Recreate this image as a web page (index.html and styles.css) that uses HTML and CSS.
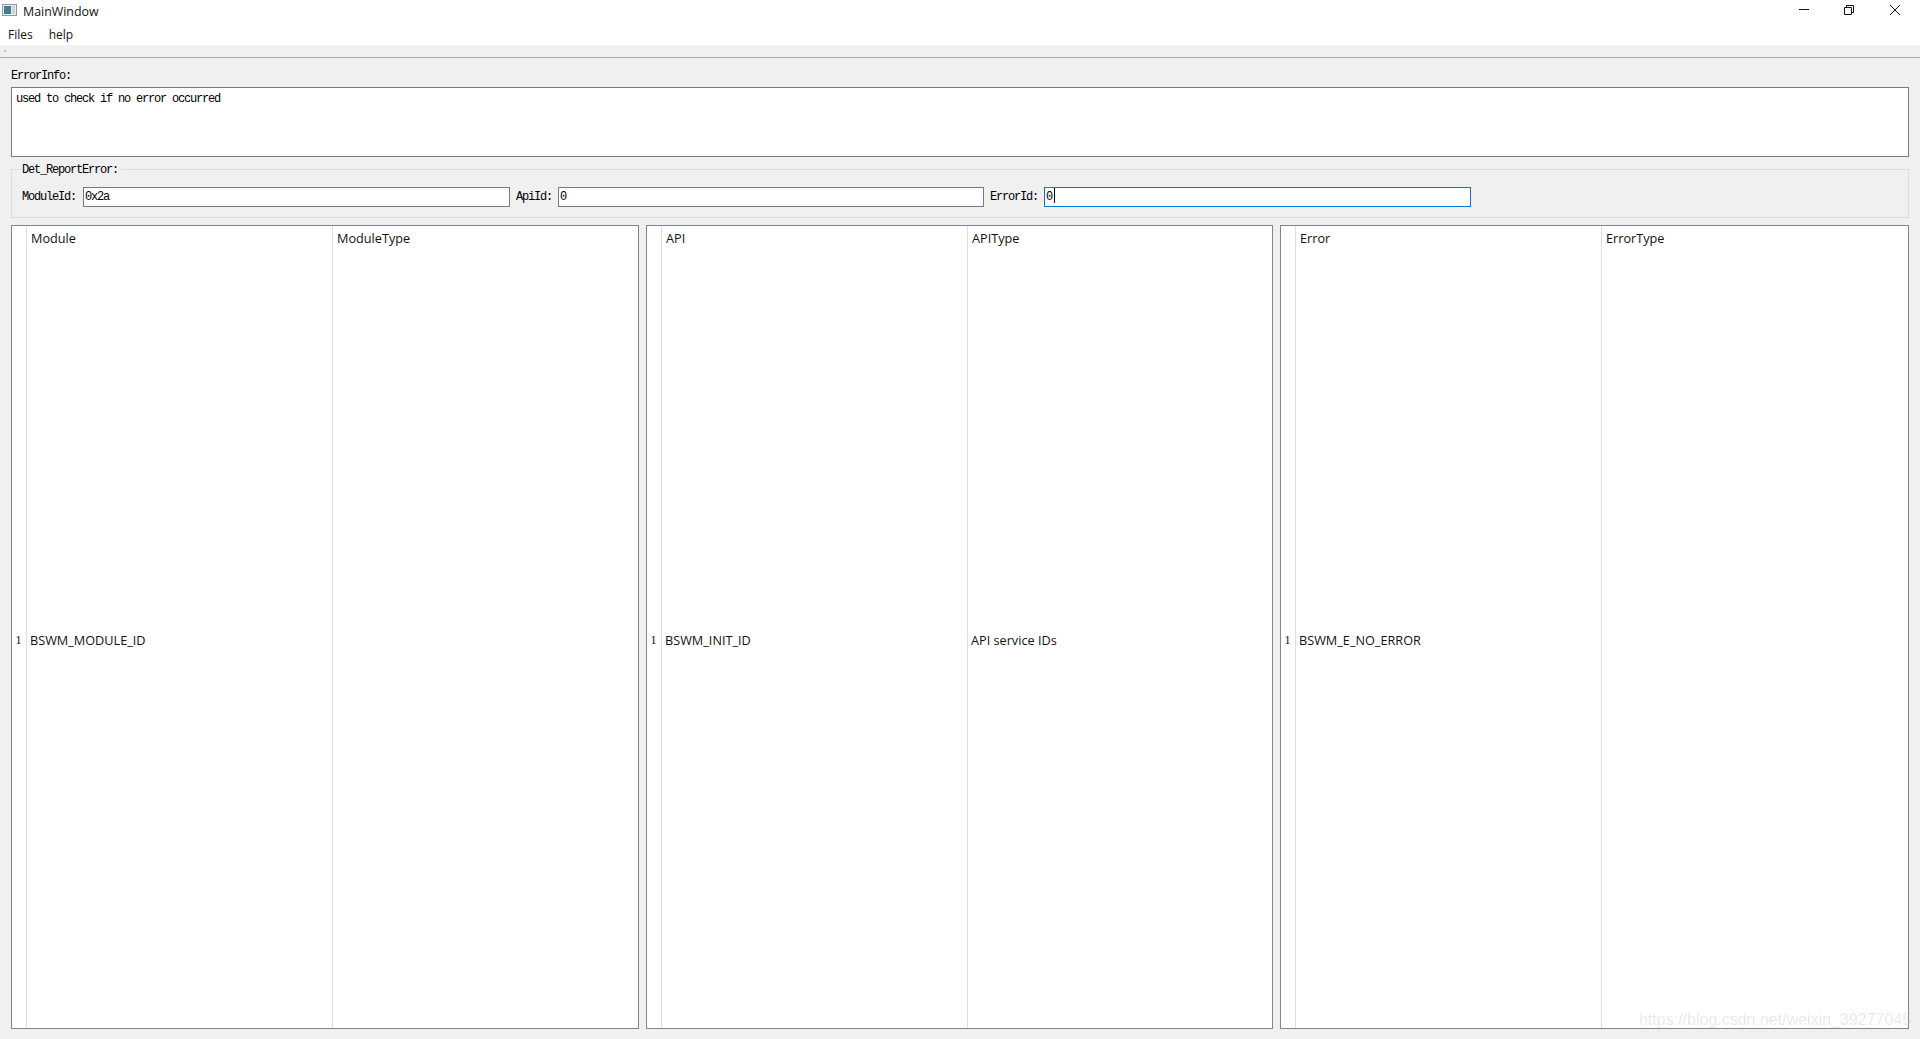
FILE: index.html
```html
<!DOCTYPE html>
<html lang="en">
<head>
<meta charset="utf-8">
<title>MainWindow</title>
<link rel="stylesheet" href="styles.css">
</head>
<body>
<div class="window">
  <header class="titlebar">
    <svg class="app-icon" width="15" height="12" viewBox="0 0 15 12">
      <rect x="0.5" y="0.5" width="14" height="11" fill="#e9edf0" stroke="#8f9aa3"/>
      <rect x="2" y="2" width="7" height="8" fill="#3f7f93"/>
      <rect x="10" y="2" width="3" height="8" fill="#c9d6d2"/>
    </svg>
    <span class="title">MainWindow</span>
    <div class="controls">
      <svg class="ctl" width="12" height="12" viewBox="0 0 12 12"><path d="M1 5.5H11" stroke="#111" fill="none"/></svg>
      <svg class="ctl" width="12" height="12" viewBox="0 0 12 12"><path d="M1.5 3.5H8.5V10.5H1.5ZM3.5 3.5V1.5H10.5V8.5H8.5" stroke="#111" fill="none"/></svg>
      <svg class="ctl close" width="12" height="12" viewBox="0 0 12 12"><path d="M1 1L11 11M11 1L1 11" stroke="#111" fill="none"/></svg>
    </div>
  </header>
  <nav class="menubar"><span>Files</span><span>help</span></nav>
  <div class="strip"><i class="grip"></i></div>
  <main class="central">
    <label class="caption">ErrorInfo:</label>
    <div class="errorbox">used to check if no error occurred</div>
    <section class="group">
      <span class="legend">Det_ReportError:</span>
      <div class="fields">
        <span class="label module">ModuleId:</span><span class="field">0x2a</span>
        <span class="label api">ApiId:</span><span class="field mid">0</span>
        <span class="label err">ErrorId:</span><span class="field focus">0<i class="caret"></i></span>
      </div>
    </section>
    <div class="tables">
      <div class="table">
        <div class="vhead"><span>1</span></div>
        <div class="col first"><div class="th">Module</div><div class="body">BSWM_MODULE_ID</div></div>
        <div class="col"><div class="th">ModuleType</div><div class="body"></div></div>
      </div>
      <div class="table">
        <div class="vhead"><span>1</span></div>
        <div class="col first"><div class="th">API</div><div class="body">BSWM_INIT_ID</div></div>
        <div class="col"><div class="th">APIType</div><div class="body">API service IDs</div></div>
      </div>
      <div class="table last">
        <div class="vhead"><span>1</span></div>
        <div class="col first"><div class="th">Error</div><div class="body">BSWM_E_NO_ERROR</div></div>
        <div class="col"><div class="th">ErrorType</div><div class="body"></div></div>
      </div>
    </div>
  </main>
  <div class="watermark">https://blog.csdn.net/weixin_39277045</div>
</div>
</body>
</html>
```
FILE: styles.css
```css
* { box-sizing: border-box; }
html, body { margin: 0; height: 100%; overflow: hidden; }
.window {
  position: relative;
  height: 1039px;
  display: flex;
  flex-direction: column;
  background: #f0f0f0;
  font-family: "Open Sans", "Noto Sans", sans-serif;
  font-size: 12px;
  color: #111;
}
.titlebar {
  height: 22px;
  flex: none;
  background: #fff;
  display: flex;
  align-items: center;
  padding-left: 2px;
}
.app-icon { flex: none; margin-top: -2px; }
.title { margin-left: 6px; font-size: 12.4px; }
.controls {
  margin-left: auto;
  display: flex;
  gap: 33px;
  padding-right: 19px;
  margin-top: -3px;
}
.ctl { display: block; }
.ctl.close { margin-left: 1px; }
.menubar {
  height: 24px;
  flex: none;
  background: #fff;
  display: flex;
  align-items: center;
  gap: 16px;
  padding: 1px 0 0 8px;
  border-bottom: 1px solid #f5f5f5;
}
.strip {
  height: 12px;
  flex: none;
  background: #f0f0f0;
  border-bottom: 1px solid #ababab;
  padding: 4px 0 0 4px;
}
.grip { display: block; width: 2px; height: 2px; background: #c4c4c4; }
.central {
  flex: 1;
  min-height: 0;
  display: flex;
  flex-direction: column;
  padding: 0 11px 10px;
}
.caption, .legend, .label, .errorbox, .field {
  font-family: "Liberation Mono", monospace;
  font-size: 12px;
  letter-spacing: -1.2px;
  color: #000;
}
.caption { height: 29px; line-height: 36px; flex: none; }
.errorbox {
  height: 70px;
  flex: none;
  background: #fff;
  border: 1px solid #7a7a7a;
  padding: 4px 4px;
  line-height: 14px;
}
.group {
  position: relative;
  height: 49px;
  flex: none;
  margin-top: 12px;
  border: 1px solid #dcdcdc;
}
.legend {
  position: absolute;
  left: 8px;
  top: -6px;
  padding: 0 3px 0 2px;
  line-height: 13px;
  background: #f0f0f0;
}
.fields {
  display: flex;
  align-items: center;
  height: 100%;
  padding: 7px 0 0 10px;
}
.label { flex: none; }
.label.module { width: 61px; }
.label.api { margin-left: 6px; width: 42px; }
.label.err { margin-left: 6px; width: 54px; }
.field {
  width: 427px;
  height: 20px;
  flex: none;
  background: #fff;
  border: 1px solid #7a7a7a;
  padding-left: 1px;
  line-height: 18px;
}
.field.mid { width: 426px; }
.field.focus { border-color: #0078d7; }
.caret {
  display: inline-block;
  width: 1px;
  height: 15px;
  background: #000;
  vertical-align: -3px;
  margin-left: 2px;
}
.tables {
  flex: 1;
  min-height: 0;
  margin-top: 7px;
  display: flex;
  gap: 7px;
}
.table {
  flex: none;
  width: 628px;
  min-width: 0;
  display: flex;
  background: #fff;
  border: 1px solid #7f868d;
  font-size: 12.7px;
}
.table + .table { width: 627px; }
.table.last { flex: 1; width: auto; }
.vhead {
  width: 15px;
  flex: none;
  display: flex;
  align-items: center;
  justify-content: center;
  padding: 26px 1px 0 0;
  border-right: 1px solid #dfdfdf;
  font-family: "Liberation Serif", serif;
  font-size: 12px;
}
.col { display: flex; flex-direction: column; flex: 1; min-width: 0; }
.col.first { flex: none; width: 306px; border-right: 1px solid #dfdfdf; }
.th { height: 26px; flex: none; padding: 2px 0 0 4px; line-height: 20px; }
.body {
  flex: 1;
  display: flex;
  align-items: center;
  padding: 0 0 1px 3px;
}
.watermark {
  position: absolute;
  left: 1639px;
  top: 1011px;
  font-family: "Liberation Sans", sans-serif;
  font-size: 16px;
  white-space: nowrap;
  color: rgba(200, 200, 200, 0.4);
  filter: blur(0.6px);
  pointer-events: none;
}
```
